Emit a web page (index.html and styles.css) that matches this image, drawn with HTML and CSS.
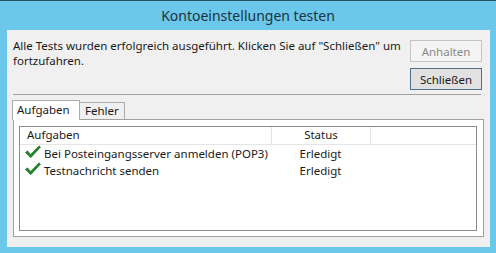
FILE: index.html
```html
<!DOCTYPE html>
<html lang="de">
<head>
  <meta charset="UTF-8" />
  <title>Kontoeinstellungen testen</title>
  <link rel="stylesheet" href="styles.css">
</head>
<body>

  <div class="fenster">
    <div class="titelleiste">Kontoeinstellungen testen</div>

    <div class="inhalt">
      <div class="kopf">
        <p class="meldung">Alle Tests wurden erfolgreich ausgeführt. Klicken Sie auf "Schließen" um<br>fortzufahren.</p>
        <div class="aktionen">
          <button class="knopf" disabled>Anhalten</button>
          <button class="knopf standard">Schließen</button>
        </div>
      </div>

      <div class="trenner"></div>

      <!-- Registerkarten -->
      <div class="reiter">
        <div class="reiter-tab aktiv">Aufgaben</div>
        <div class="reiter-tab">Fehler</div>
      </div>

      <div class="reiter-seite">
        <div class="liste">
          <div class="liste-kopf">
            <div class="spalte-aufgabe">Aufgaben</div>
            <div class="spalte-status">Status</div>
          </div>
          <div class="zeile">
            <div class="spalte-aufgabe">
              <svg class="haken" width="16" height="14" viewBox="0 0 16 14">
                <path d="M0.5 7.5 L2.5 5.8 L5.6 9.4 L14 0.8 L15.5 2.2 L5.7 12.8 Z" fill="#23862a" stroke="#16661b" stroke-width="0.6"/>
              </svg>
              Bei Posteingangsserver anmelden (POP3)
            </div>
            <div class="spalte-status">Erledigt</div>
          </div>
          <div class="zeile">
            <div class="spalte-aufgabe">
              <svg class="haken" width="16" height="14" viewBox="0 0 16 14">
                <path d="M0.5 7.5 L2.5 5.8 L5.6 9.4 L14 0.8 L15.5 2.2 L5.7 12.8 Z" fill="#23862a" stroke="#16661b" stroke-width="0.6"/>
              </svg>
              Testnachricht senden
            </div>
            <div class="spalte-status">Erledigt</div>
          </div>
        </div>
      </div>
    </div>
  </div>

</body>
</html>
```

FILE: styles.css
```css
body {
  margin: 0;
  background-color: #6bc8ea;
  font-family: 'Noto Sans', 'Open Sans', sans-serif;
  font-size: 11.5px;
  color: #1a1a1a;
}

.fenster {
  width: 496px;
  height: 253px;
  border-top: 1px solid #2f4f5f;
  box-sizing: border-box;
}

.titelleiste {
  height: 29px;
  line-height: 29px;
  text-align: center;
  font-size: 14px;
  color: #1d3340;
}

.inhalt {
  margin: 0 6px 0 7px;
  height: 217px;
  background-color: #f0f0f0;
  padding: 0 6px;
  box-sizing: border-box;
}

.kopf {
  display: flex;
  justify-content: space-between;
  padding-top: 10px;
}

.meldung {
  margin: -2px 0 0;
  line-height: 15px;
  white-space: nowrap;
}

.aktionen {
  display: flex;
  flex-direction: column;
  gap: 6px;
  margin-right: 2px;
}

.knopf {
  width: 72px;
  height: 22px;
  padding: 0;
  font-family: inherit;
  font-size: 11.5px;
  background-color: #e1e1e1;
  border: 1px solid #adadad;
  color: #1a1a1a;
}

.knopf:disabled {
  background-color: #f4f4f4;
  border-color: #c4c4c4;
  color: #8a8a8a;
}

.knopf.standard {
  border-color: #50708c;
}

.trenner {
  margin: 4px 3px 0 0;
  height: 1px;
  background-color: #a0a0a0;
}

.reiter {
  display: flex;
  margin-top: 5px;
  height: 19px;
  align-items: flex-end;
}

.reiter-tab {
  height: 16px;
  line-height: 16px;
  padding: 0 5px;
  border: 1px solid #acacac;
  border-bottom: none;
  background-color: #f0f0f0;
  margin-left: -1px;
}

.reiter-tab.aktiv {
  height: 19px;
  line-height: 18px;
  width: 58px;
  padding: 0 4px;
  margin-left: -1px;
  background-color: #fff;
  position: relative;
  z-index: 1;
  margin-bottom: -1px;
}

.reiter-seite {
  height: 118px;
  border: 1px solid #a0a0a0;
  background-color: #fff;
  padding: 6px 6px 5px 5px;
  box-sizing: border-box;
}

.liste {
  height: 105px;
  border: 1px solid #8c8c8c;
  box-sizing: border-box;
  background-color: #fff;
}

.liste-kopf {
  display: flex;
  height: 17px;
  line-height: 16px;
  border-bottom: 1px solid #e5e5e5;
}

.liste-kopf .spalte-aufgabe {
  width: 244px;
  padding-left: 7px;
  border-right: 1px solid #e5e5e5;
}

.liste-kopf .spalte-status {
  width: 98px;
  text-align: center;
  border-right: 1px solid #e5e5e5;
}

.zeile {
  display: flex;
  height: 17px;
  line-height: 17px;
  white-space: nowrap;
}

.zeile .spalte-aufgabe {
  width: 246px;
  padding-left: 5px;
  display: flex;
  align-items: center;
  gap: 3px;
}

.zeile .spalte-status {
  width: 99px;
  text-align: center;
}

.haken {
  flex: none;
  margin-top: -3px;
}
```
